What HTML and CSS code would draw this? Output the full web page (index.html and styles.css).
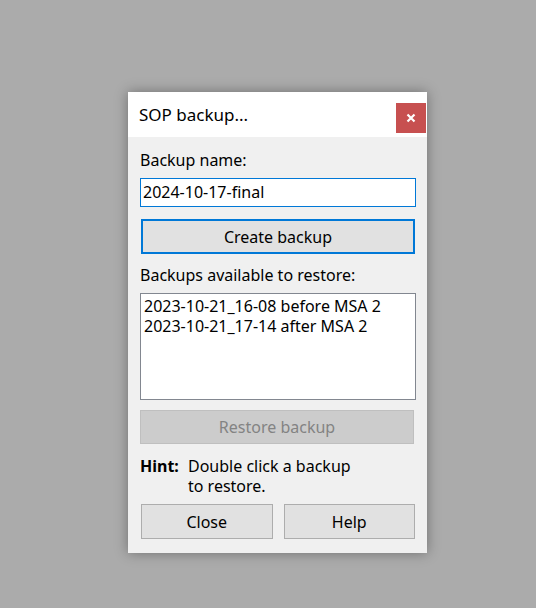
FILE: index.html
```html
<!DOCTYPE html>
<html>
<head>
<meta charset="utf-8">
<link rel="stylesheet" href="styles.css">
</head>
<body>
<div class="dialog">
  <div class="titlebar">
    <span class="title">SOP backup...</span>
    <button class="close" aria-label="Close">
      <svg width="10" height="10" viewBox="0 0 10 10"><path d="M1.5 1.5 L8.5 8.5 M8.5 1.5 L1.5 8.5" stroke="#fff" stroke-width="2.2" stroke-linecap="butt"/></svg>
    </button>
  </div>
  <div class="content">
    <div class="label first">Backup name:</div>
    <div class="input">2024-10-17-final</div>
    <div class="btn btn-focus">Create backup</div>
    <div class="label second">Backups available to restore:</div>
    <div class="listbox">
      <div class="item">2023-10-21_16-08 before MSA 2</div>
      <div class="item">2023-10-21_17-14 after MSA 2</div>
    </div>
    <div class="btn btn-disabled">Restore backup</div>
    <div class="hint">
      <span class="hint-key">Hint:</span>
      <span class="hint-text">Double click a backup<br>to restore.</span>
    </div>
    <div class="actions">
      <div class="btn btn-action">Close</div>
      <div class="btn btn-action">Help</div>
    </div>
  </div>
</div>
</body>
</html>
```
FILE: styles.css
```css
html, body {
  margin: 0;
  padding: 0;
  background: #ababab;
  height: 100%;
}
body {
  padding: 92px 0 0 128px;
  box-sizing: border-box;
  font-family: "Noto Sans", "DejaVu Sans", sans-serif;
  font-size: 16px;
  color: #000;
}
.dialog {
  width: 299px;
  height: 461px;
  background: #f0f0f0;
  box-shadow: 0 0 12px rgba(0,0,0,0.35);
  display: flex;
  flex-direction: column;
}
.titlebar {
  height: 45px;
  background: #fff;
  display: flex;
  align-items: flex-start;
  justify-content: space-between;
}
.title {
  font-size: 17px;
  line-height: 22px;
  margin: 12px 0 0 11px;
  color: #000;
}
.close {
  width: 30px;
  height: 30px;
  margin: 11px 1px 0 0;
  border: none;
  padding: 0;
  background: #c75050;
  display: flex;
  align-items: center;
  justify-content: center;
}
.content {
  padding: 0 11px 0 12px;
  display: flex;
  flex-direction: column;
}
.label {
  line-height: 20px;
}
.label.first { margin-top: 13px; }
.label.second { margin-top: 11px; }
.input {
  margin-top: 8px;
  height: 29px;
  box-sizing: border-box;
  border: 1px solid #0078d7;
  background: #fff;
  padding: 0 0 0 2px;
  line-height: 26px;
}
.btn {
  box-sizing: border-box;
  display: flex;
  align-items: center;
  justify-content: center;
  background: #e1e1e1;
  border: 1px solid #adadad;
}
.btn-focus {
  margin: 12px 1px 0 1px;
  height: 35px;
  border: 2px solid #0078d7;
}
.listbox {
  margin-top: 8px;
  height: 107px;
  box-sizing: border-box;
  border: 1px solid #828790;
  background: #fff;
  padding: 2px 0 0 3px;
}
.item {
  line-height: 20px;
}
.btn-disabled {
  margin: 10px 2px 0 0;
  height: 34px;
  background: #cccccc;
  border-color: #bfbfbf;
  color: #838383;
}
.hint {
  margin-top: 12px;
  display: flex;
  line-height: 20px;
}
.hint-key {
  font-weight: bold;
  width: 48px;
}
.actions {
  margin: 8px 1px 0 1px;
  display: flex;
  gap: 11px;
}
.btn-action {
  flex: 1;
  height: 35px;
}
```
